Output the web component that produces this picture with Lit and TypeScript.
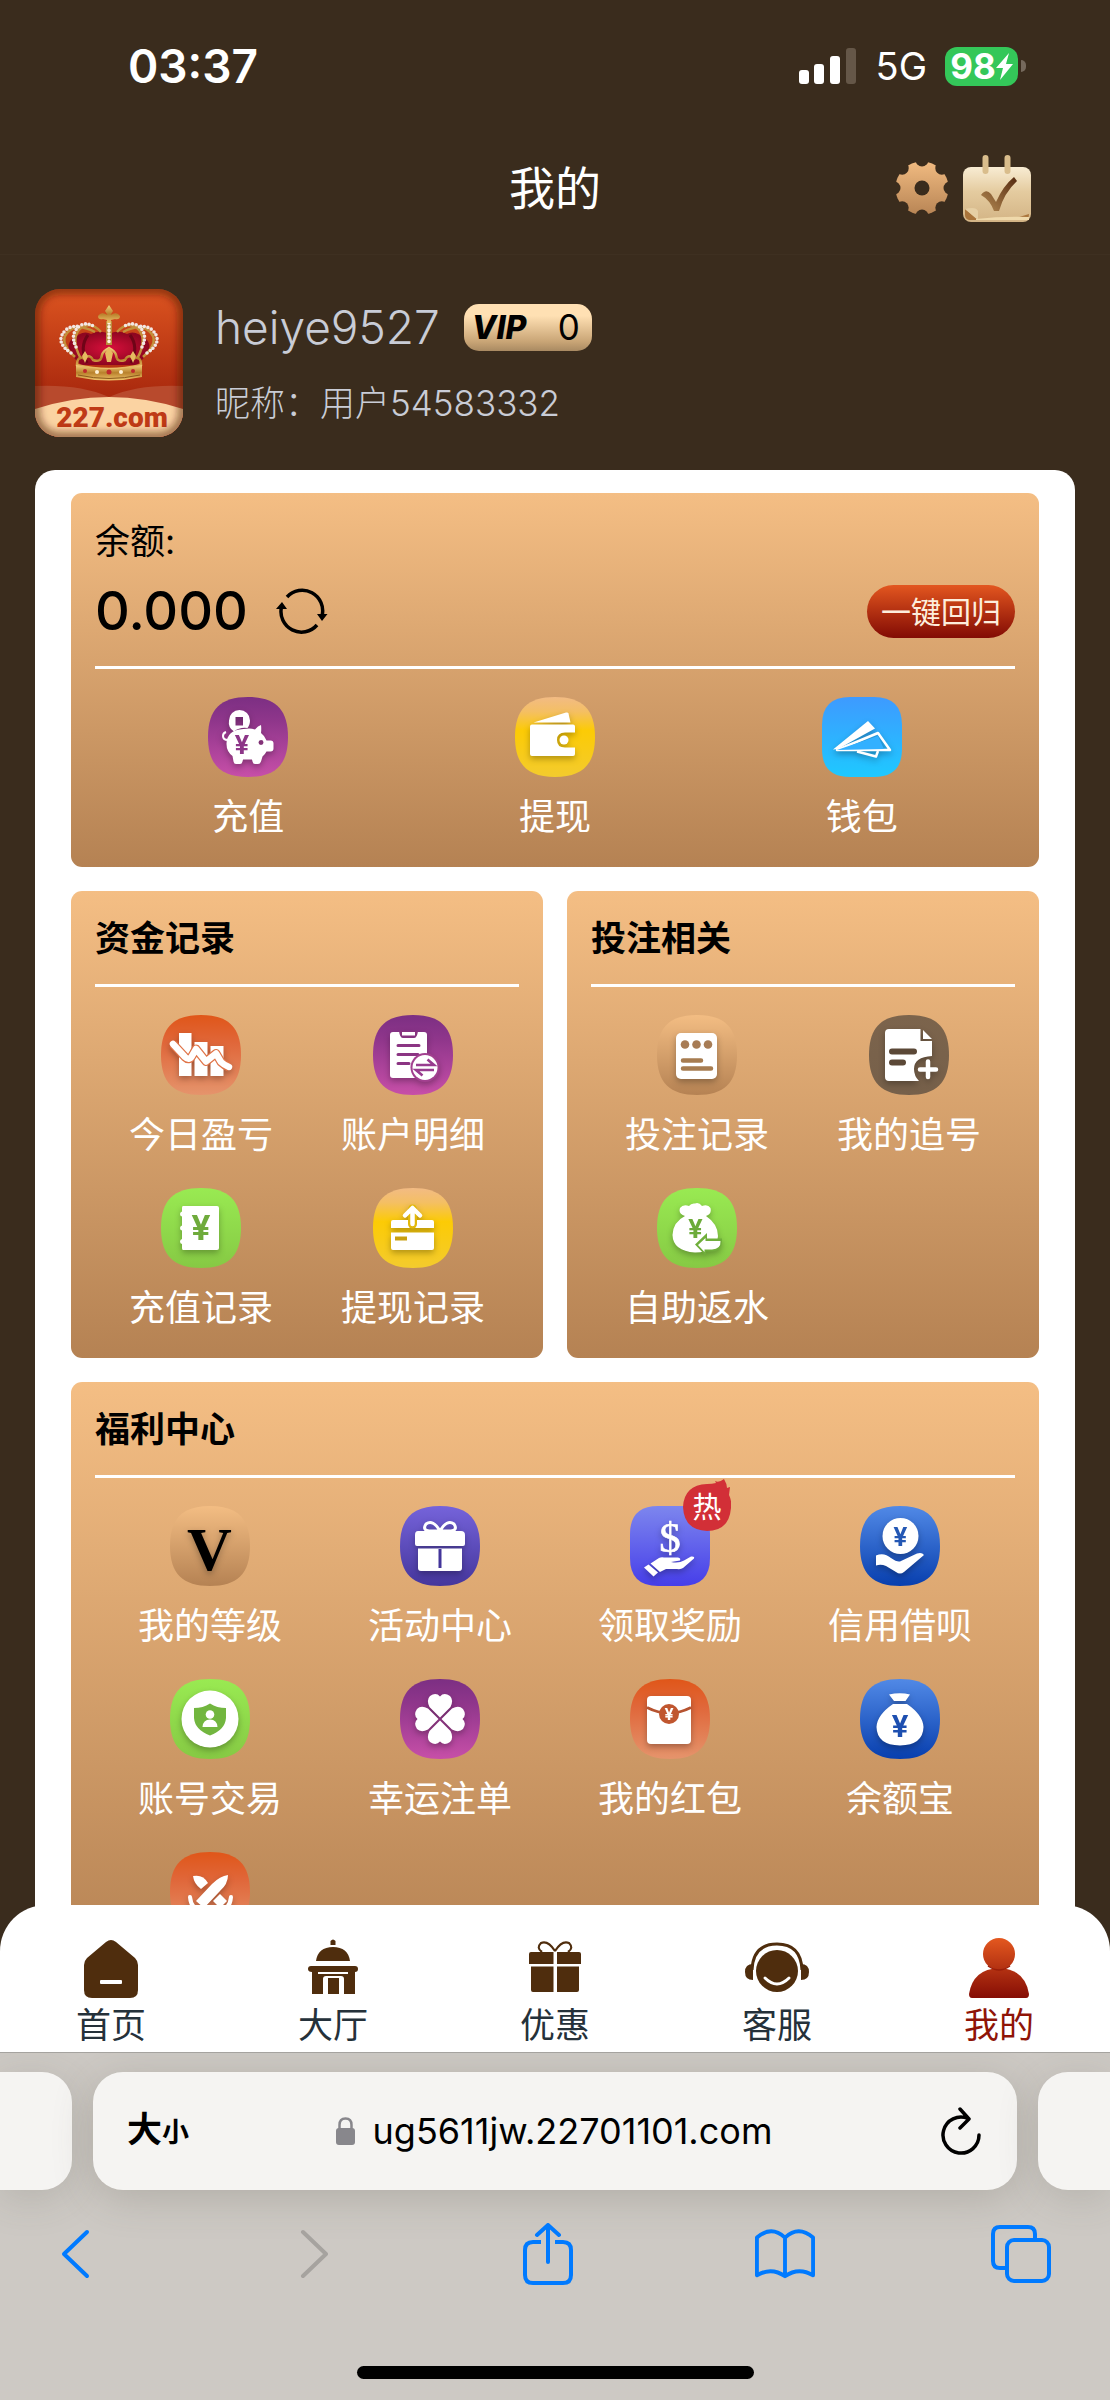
import { LitElement, html, svg, css, TemplateResult, SVGTemplateResult } from "lit";
import { customElement, property } from "lit/decorators.js";

type Stop = [number, string];

const GRADIENTS: Record<string, Stop[]> = {
  purple: [[0, "#7c2f83"], [0.3, "#8f368b"], [1, "#c74fa8"]],
  gold: [[0, "#f2bb84"], [0.18, "#f4bf64"], [0.42, "#fccb05"], [1, "#f3cb2e"]],
  sky: [[0, "#3e9aff"], [1, "#1ec9ff"]],
  orange: [[0, "#e05619"], [0.35, "#e0673a"], [1, "#e5946c"]],
  green: [[0, "#99ea52"], [1, "#86c944"]],
  tan: [[0, "#f3bd83"], [1, "#b58253"]],
  umber: [[0, "#7c644c"], [1, "#76604a"]],
  indigo: [[0, "#7563da"], [1, "#45369c"]],
  violet: [[0, "#7d86ee"], [1, "#463ee9"]],
  blue: [[0, "#5189e6"], [1, "#083fae"]],
};

const yen = (x: number, y: number, size: number, fill: string) =>
  svg`<text x=${x} y=${y} font-size=${size} fill=${fill} font-weight="700" text-anchor="middle" font-family="Inter, sans-serif">¥</text>`;

const GLYPHS: Record<string, SVGTemplateResult> = {
  piggy: svg`
    <path fill-rule="evenodd" d="M31.500 13a10.500 10.500 0 0 1 10.500 10.500c0 3-1 5.500-2.500 7.500q-8-1-13.500 3.500a10.800 10.800 0 0 1-5-11a10.500 10.500 0 0 1 10.500-10.500ZM27.500 20v8.500h7.500v-8.500Z"/>
    <path fill-rule="evenodd" d="M41 31.500q3 0 6 1 3-4 6-4.500.5 4 0 8 4 3 5.500 7.500h4q3 0 3 3v5q0 3-3 3h-4q-1.500 3-4 5l-1.500 5q-1 2.500-3 2.500h-3q-2 0-2.500-2.500l-.5-2h-9l-.5 2q-.5 2.500-2.500 2.500h-4q-2 0-2.500-2.500l-1-5.500q-6-4.500-6-12 0-14 17-15ZM53 43a2.500 2.500 0 1 0 .01 5a2.500 2.500 0 1 0-.01-5Z"/>
    <path d="M20 43q-5 0-5-4 0-3 3-4" fill="none" stroke="#fff" stroke-width="2"/>
    ${yen(34, 57, 26, "#8d3688")}`,
  wallet: svg`
    <path d="M18.500 25.500L51 15.500q2-.5 2.500 1l2 9Z"/>
    <path d="M17 27.500h41q2 0 2 2V35.500H50q-8 0-8 7.500t8 7.500H60V57q0 2-2 2H17q-2 0-2-2V29.500q0-2 2-2Z"/>
    <circle cx="49" cy="43" r="4.500"/>`,
  plane: svg`
    <path d="M11 52.500L46 24 53 31.500 16 52Z"/>
    <path d="M15 53L56 36 68 53Z" fill="none" stroke="#fff" stroke-width="2.500" stroke-linejoin="round"/>
    <path d="M15 53L56 39 62 52Z" fill="#33b0ff"/>
    <path d="M35 54.500L54 59.500 56 54" fill="none" stroke="#fff" stroke-width="2.500" stroke-linejoin="round"/>`,
  bars: svg`
    <path d="M18 18h12.500v43H18ZM33.500 27h13v34h-13ZM49.500 31h13v30h-13Z"/>
    <path d="M12 29L24 42Q28 46 31 41L35 34 45 46.500 55 38.500 60 47Q63 50 68 52" fill="none" stroke="#e07448" stroke-width="9" stroke-linejoin="round"/>
    <path d="M12 29L24 42Q28 46 31 41L35 34 45 46.500 55 38.500 60 47Q63 50 68 52" fill="none" stroke="#fff" stroke-width="6.500" stroke-linejoin="round" stroke-linecap="round"/>`,
  clipboard: svg`
    <path d="M20 17h31q3 0 3 3v40q0 3-3 3H20q-3 0-3-3V20q0-3 3-3Z"/>
    <path d="M26 16q1 8 5 7h9q4 1 5-7Z" fill="#87337f"/>
    <path d="M29 17h13v3.500H29Z"/>
    <path d="M25 30.500h21M25 39.500h20M25 48.500h11" stroke="#8b3583" stroke-width="3" stroke-linecap="round"/>
    <circle cx="52" cy="52.500" r="14.500" fill="#a2408f"/><circle cx="52" cy="52.500" r="12.500"/>
    <path d="M43 50H61L54.500 44.500M61 55H43L49.500 60.500" stroke="#983c8f" stroke-width="2.600" fill="none"/>`,
  ledger: svg`
    <path d="M22 18h34q2 0 2 2v40q0 2-2 2H22q-1 0-1-2v-4q-2-.5-2-2.500t2-2.500V42.500q-2-.5-2-2.500t2-2.500V28.500q-2-.5-2-2.500t2-2.500V20q0-2 1-2Z"/>
    ${yen(40, 52, 34, "#6fab3c")}`,
  cardup: svg`
    <path d="M20 32h39q2 0 2 2v6H18v-6q0-2 2-2ZM18 44.500h43V60q0 2-2 2H20q-2 0-2-2Z"/>
    <path d="M22 48.500h12v4H22Z" fill="#c9a011"/>
    <path d="M39.500 21V36" stroke="#e2b808" stroke-width="9" stroke-linecap="round"/>
    <path d="M39.500 21V36M32 27.500L39.500 20 47 27.500" fill="none" stroke="#fff" stroke-width="4.500" stroke-linecap="round" stroke-linejoin="round"/>`,
  betlist: svg`
    <rect x="19" y="18" width="41" height="46" rx="5"/>
    <g fill="#a77c55"><circle cx="28" cy="29.500" r="4.300"/><circle cx="39.500" cy="29.500" r="4.300"/><circle cx="51" cy="29.500" r="4.300"/></g>
    <path d="M26 45.500H44M26 53.500H54" stroke="#a77c50" stroke-width="4.500" stroke-linecap="round"/>`,
  chase: svg`
    <path d="M20 14H51.500V26H63V41Q45 42 45 54 45 61 50 66H20Q16 66 16 62V18Q16 14 20 14ZM54 15L63 24H54Z"/>
    <path d="M23 36.500H45M23 47.500H34" stroke="#5b4837" stroke-width="6" stroke-linecap="round"/>
    <path d="M59 46.500V62M51 54.500H67" stroke="#fff" stroke-width="4.500" stroke-linecap="round"/>`,
  rebate: svg`
    <path d="M28 28Q21 26 23 20 26 16 32 18 34 15 38 15.500 42 14 45 18 51 16 53.500 20 55 26 49 28 61 36 61 48 60 64 38 64.500 16 63 15.500 47 16 34 28 28Z"/>
    <path d="M38 56.500L50 45V50.500H65Q66 63 55 63.500H49V68Z" fill="#6fae3b"/>
    <path d="M41 57L48.500 50V53H63.500Q64 61 55 61.500H47.500V64Z"/>
    ${yen(38.5, 50, 26, "#6cab3a")}`,
  level: svg`<text x="39.500" y="64" font-size="62" font-weight="700" fill="#000" text-anchor="middle" font-family="Liberation Serif, serif">V</text>`,
  gift: svg`
    <path d="M18 25H61Q65 25 65 29V38Q65 40 63 40H17Q15 40 15 38V29Q15 25 18 25ZM18 42.500H62V62Q62 65 59 65H21Q18 65 18 62Z"/>
    <path d="M40 43V62" stroke="#43359a" stroke-width="3"/>
    <path d="M40 25Q33 13 26 18 22 24 29 25ZM40 25Q47 13 54 18 58 24 51 25Z" fill="none" stroke="#fff" stroke-width="3"/>`,
  shield: svg`
    <circle cx="40" cy="40" r="28.500"/>
    <path d="M40 24.500Q47 29 56 29V39Q55 51 40 56.500 25 51 24 39V29Q33 29 40 24.500Z" fill="#72b63f"/>
    <circle cx="40" cy="35.500" r="4.300"/><path d="M32.500 48Q33 40.500 40 40.500T47.500 48Z"/>`,
  clover: svg`${[0, 90, 180, 270].map(
    (a) => svg`<path transform="rotate(${a} 40 40)" d="M40 38.500L29.500 28Q26 21 30 17 36 13 40 17.500 44 13 50 17 54 21 50.500 28Z"/>`
  )}`,
  reward: svg`
    <text x="40" y="45.500" font-size="43" fill="#fff" stroke="#fff" stroke-width=".6" text-anchor="middle" font-family="Liberation Serif, serif">$</text>
    <path d="M14 61.500L18.500 58.500 28 66.500 23.500 70.500Z"/>
    <path d="M20.500 57.500L29 52Q31 51 34 51.500H48Q51 52 50 54.500L41 56Q49 57.500 54 54.500L61 50.500Q65 50 64 52.500L53 62Q51 63.500 47 63H36L30 66Z"/>`,
  credit: svg`
    <circle cx="40.500" cy="30" r="18"/>
    ${yen(40.5, 39.5, 25, "#2458b4")}
    <path d="M16 49.500Q24 46 31 52 38 57 41 55L57 47.500Q62 46 64 49L44 66Q40 69 36 66L26 60Q21 58 16 59.500Z"/>`,
  envelope: svg`
    <rect x="17" y="17" width="44" height="48" rx="4"/>
    <path d="M17 28.500Q28 34 39 34.500 50 34 61 28.500" fill="none" stroke="#b65330" stroke-width="3"/>
    <circle cx="39" cy="35" r="10" fill="#c0562f"/>
    ${yen(39, 40.5, 16, "#fff")}`,
  moneybag: svg`
    <path d="M29 15.500Q40 13 50 15.500L45.500 22H34ZM33 25H47Q63 36 63.500 48 63 66 40 66.500 17 66 16.500 48 17 36 33 25Z"/>
    ${yen(40, 58, 30, "#1d4fb0")}`,
  swords: svg`
    <path d="M23 24Q33 22 38 31L31 37Q24 32 23 24Z"/>
    <path d="M58 23Q58 32 50 39L34 56 26 49 42 32Q50 24 58 23Z"/>
    <path d="M50 42L57 49 50 56 43 49Z"/>
    <path d="M20 45Q21 58 34 61M61 45Q60 58 47 61" fill="none" stroke="#fff" stroke-width="4" stroke-linecap="round"/>`,
};

const SQUIRCLE = "M40 0C67 0 80 12 80 40S67 80 40 80 0 68 0 40 13 0 40 0Z";
const ROUNDED = "M28 0H52Q80 0 80 28V52Q80 80 52 80H28Q0 80 0 52V28Q0 0 28 0Z";

@customElement("app-tile")
class AppTile extends LitElement {
  @property() glyph = "";
  @property() tone = "tan";
  @property() label = "";
  @property() badge = "";
  @property({ type: Boolean }) rounded = false;

  static styles = css`
    :host { display: block; }
    .tile {
      display: flex; flex-direction: column; align-items: center; gap: 16px;
      text-decoration: none; color: #fff; font-size: 36px; line-height: 48px; white-space: nowrap;
    }
    .art { position: relative; display: block; width: 80px; height: 80px; }
    .icon { display: block; width: 80px; height: 80px; overflow: visible; }
    .glyph { filter: drop-shadow(0 3px 3px rgba(0, 0, 0, 0.28)); }
    .badge {
      position: absolute; left: 53px; top: -27px; width: 48px; height: 52px;
      display: flex; align-items: flex-end; justify-content: center;
    }
    .flame { position: absolute; inset: 0; width: 48px; height: 52px; }
    .hot { position: relative; font-size: 29px; line-height: 46px; }
  `;

  render() {
    const stops = GRADIENTS[this.tone];
    return html`
      <a class="tile" href="#">
        <span class="art">
          <svg class="icon" viewBox="0 0 80 80" aria-hidden="true">
            <defs>
              <linearGradient id="tone" x1="0" y1="0" x2="0" y2="1">
                ${stops.map(([o, c]) => svg`<stop offset=${o} stop-color=${c}></stop>`)}
              </linearGradient>
            </defs>
            <path d=${this.rounded ? ROUNDED : SQUIRCLE} fill="url(#tone)"></path>
            <g class="glyph" fill="#fff">${GLYPHS[this.glyph]}</g>
          </svg>
          ${this.badge
            ? html`<span class="badge">
                <svg class="flame" viewBox="0 0 48 52" aria-hidden="true">
                  <path fill="#d22f37" d="M24 5Q29 5 33 4L32 2Q36 4 41 0 44 5 44 9L47 8 46 16Q49 22 48 29 46 52 24 52 1 51 0 28 1 6 24 5Z"></path>
                </svg>
                <span class="hot">${this.badge}</span>
              </span>`
            : null}
        </span>
        <span>${this.label}</span>
      </a>
    `;
  }
}

interface Tile {
  glyph: string;
  tone: string;
  label: string;
  badge?: string;
  rounded?: boolean;
}

const WALLET: Tile[] = [
  { glyph: "piggy", tone: "purple", label: "充值" },
  { glyph: "wallet", tone: "gold", label: "提现" },
  { glyph: "plane", tone: "sky", label: "钱包", rounded: true },
];
const FUNDS: Tile[] = [
  { glyph: "bars", tone: "orange", label: "今日盈亏" },
  { glyph: "clipboard", tone: "purple", label: "账户明细" },
  { glyph: "ledger", tone: "green", label: "充值记录" },
  { glyph: "cardup", tone: "gold", label: "提现记录" },
];
const BETS: Tile[] = [
  { glyph: "betlist", tone: "tan", label: "投注记录" },
  { glyph: "chase", tone: "umber", label: "我的追号" },
  { glyph: "rebate", tone: "green", label: "自助返水" },
];
const WELFARE: Tile[] = [
  { glyph: "level", tone: "tan", label: "我的等级" },
  { glyph: "gift", tone: "indigo", label: "活动中心" },
  { glyph: "reward", tone: "violet", label: "领取奖励", badge: "热", rounded: true },
  { glyph: "credit", tone: "blue", label: "信用借呗" },
  { glyph: "shield", tone: "green", label: "账号交易" },
  { glyph: "clover", tone: "purple", label: "幸运注单" },
  { glyph: "envelope", tone: "orange", label: "我的红包" },
  { glyph: "moneybag", tone: "blue", label: "余额宝" },
  { glyph: "swords", tone: "orange", label: "" },
];

const TABS: { label: string; art: SVGTemplateResult; active?: boolean }[] = [
  {
    label: "首页",
    art: svg`<path d="M25 4Q30 0 35 4L54 20Q57 23 57 27V52Q57 60 49 60H11Q3 60 3 52V27Q3 23 6 20Z"/><rect x="19" y="42" width="22" height="4" rx="1" fill="#fff"/>`,
  },
  {
    label: "大厅",
    art: svg`<path d="M27.500 7V3Q30 0 32.500 3V7ZM13 23Q15 9 30 9T47 23ZM8 28H52Q55 28 55 31T52 34V56H41V41Q41 38 38 38H23Q20 38 20 41V56H9V34Q5 34 5 31T8 28ZM25 40H36V56H25Z"/><path d="M15 35H45" stroke="#fff" stroke-width="2"/>`,
  },
  {
    label: "优惠",
    art: svg`<path d="M6 14H28.500V26H4V16Q4 14 6 14ZM32 14H54Q56 14 56 16V26H32ZM6 28.500H28.500V54H8Q6 54 6 52ZM32 28.500H54V52Q54 54 52 54H32Z"/><path d="M30 13Q23 2 16 5 11 10 17 14M30 13Q37 2 44 5 49 10 43 14" fill="none" stroke="#4f2d0d" stroke-width="2.200"/>`,
  },
  {
    label: "客服",
    art: svg`<circle cx="30" cy="33" r="21"/><path d="M5 32Q6 6 30 6T55 32" fill="none" stroke="#4f2d0d" stroke-width="3"/><path d="M6 26V42Q-2 42-2 34T6 26ZM54 26V42Q62 42 62 34T54 26Z"/><path d="M18 40Q30 52 42 40" fill="none" stroke="#fff" stroke-width="3" stroke-linecap="round"/>`,
  },
  {
    label: "我的",
    active: true,
    art: svg`<defs><linearGradient id="me" x1="0" y1="0" x2="0" y2="60" gradientUnits="userSpaceOnUse"><stop offset="0" stop-color="#e4581f"/><stop offset="1" stop-color="#850d05"/></linearGradient></defs>
      <g fill="url(#me)"><path d="M30 30Q56 31 60 56 60 60 57 60H3Q0 60 0 56 4 31 30 30Z"/><circle cx="30" cy="16" r="16"/></g><path d="M19 28Q30 36 41 28" stroke="#9a1d08" stroke-width="1.500" fill="none"/>`,
  },
];

@customElement("app-root")
class AppRoot extends LitElement {
  static styles = css`
    * { box-sizing: border-box; }
    :host {
      display: flex; flex-direction: column; height: 100vh; overflow: hidden;
      background: #3a2c1d; color: #fff;
      font-family: Inter, "Noto Sans CJK SC", sans-serif; font-size: 35px; line-height: 48px;
    }
    button { border: 0; padding: 0; background: none; color: inherit; font: inherit; cursor: pointer; }
    svg { display: block; }
    h1, h2, p { margin: 0; }

    .status { display: flex; align-items: center; justify-content: space-between; padding: 42px 84px 32px 128px; }
    .time { font-size: 46px; font-weight: 600; }
    .signals { display: flex; align-items: center; }
    .network { margin: 0 18px 0 20px; font-size: 38px; }
    .battery {
      display: flex; align-items: center; justify-content: center; width: 73px; height: 39px;
      border-radius: 12px; background: #34c759; font-size: 35px; line-height: 39px; font-weight: 700;
    }
    .nub { width: 5px; height: 12px; margin-left: 3px; border-radius: 0 6px 6px 0; background: #75695c; }

    .header {
      display: grid; grid-template-columns: 1fr auto 1fr; align-items: center; height: 133px;
      padding: 0 78px; border-bottom: 1px solid #3e3021; flex: none;
    }
    .header-title { grid-column: 2; font-size: 46px; line-height: 64px; font-weight: 400; }
    .actions { display: flex; justify-content: flex-end; align-items: center; gap: 14px; }

    .scroller { flex: 1; min-height: 0; overflow: hidden auto; scrollbar-width: none; }
    .profile { display: flex; align-items: center; gap: 32px; padding: 34px 35px 33px; }
    .who { display: flex; flex-direction: column; gap: 24px; color: #c9ccd6; }
    .name-row { display: flex; align-items: center; gap: 24px; }
    .name { font-size: 46px; line-height: 56px; font-weight: 300; }
    .nick { font-weight: 300; }
    .vip {
      display: flex; align-items: center; justify-content: space-between; width: 128px; height: 47px;
      padding: 0 12px 0 8px; border-radius: 15px; color: #000; line-height: 47px; font-size: 35px;
      background: linear-gradient(#ffe0b3 25%, #c9a576 80%, #a98a62);
    }
    .vip-word { font-size: 32px; font-weight: 800; font-style: italic; }

    .panel {
      display: flex; flex-direction: column; gap: 24px; margin: 0 35px; padding: 23px 36px 80px;
      border-radius: 20px 20px 0 0; background: #fff;
    }
    .pair { display: grid; grid-template-columns: 1fr 1fr; gap: 24px; }
    .card { padding: 0 24px 26px; border-radius: 11px; background: linear-gradient(#f4be84, #b58253); }
    .card-title {
      padding: 23px 0 22px; border-bottom: 3px solid #fff; color: #000; font-weight: 600;
      font-size: 35px; line-height: 48px;
    }
    .tiles { display: grid; row-gap: 29px; padding-top: 28px; }
    .three { grid-template-columns: repeat(3, 1fr); }
    .two { grid-template-columns: repeat(2, 1fr); }
    .four { grid-template-columns: repeat(4, 1fr); }
    .balance { padding: 24px 0 9px; border-bottom: 3px solid #fff; color: #000; }
    .amount-row { display: flex; align-items: center; height: 92px; gap: 28px; }
    .amount { font-size: 54px; font-weight: 500; }
    .collect {
      margin-left: auto; padding: 0 14px; height: 53px; border-radius: 27px; font-size: 30px; line-height: 55px;
      color: #fdeedd; background: linear-gradient(#e3561f, #820b04);
    }

    .tabs {
      position: relative; flex: none; display: grid; grid-template-columns: repeat(5, 1fr);
      margin-top: -46px; padding: 33px 0 3px; border-radius: 46px 46px 0 0; background: #fff;
    }
    .tab {
      display: flex; flex-direction: column; align-items: center; gap: 3px;
      color: #25313a; text-decoration: none; line-height: 48px;
    }
    .tab.active { color: #8f1407; }
    .tab-art { width: 60px; height: 60px; fill: #4f2d0d; overflow: visible; }

    .browser { flex: none; border-top: 1px solid #a5a39f; background: #cdc9c4; overflow: hidden; }
    .address-row { display: flex; gap: 21px; padding: 19px 0 0; }
    .peek { flex: 0 0 72px; height: 118px; background: #f5f4f2; box-shadow: 0 8px 40px rgba(80, 76, 66, 0.18); }
    .peek.left { border-radius: 0 30px 30px 0; }
    .peek.right { border-radius: 30px 0 0 30px; }
    .address {
      flex: 1; display: grid; grid-template-columns: 1fr auto 1fr; align-items: center; height: 118px; padding: 0 36px 0 34px;
      border-radius: 30px; background: #f5f4f2; color: #000; box-shadow: 0 8px 40px rgba(80, 76, 66, 0.22);
    }
    .textsize { justify-self: start; font-weight: 600; }
    .reload { justify-self: end; }
    .small { font-size: 27px; }
    .site { display: flex; align-items: center; gap: 18px; font-size: 36px; }
    .toolbar { display: flex; justify-content: space-between; align-items: center; height: 62px; margin: 33px 59px 0 45px; }
    .tool { display: flex; justify-content: center; width: 60px; }
    .indicator { width: 397px; height: 13px; margin: 81px auto 21px; border-radius: 7px; background: #000; }
  `;

  private tiles(items: Tile[], columns: string): TemplateResult {
    return html`<div class="tiles ${columns}">
      ${items.map(
        (t) => html`<app-tile .glyph=${t.glyph} .tone=${t.tone} .label=${t.label} .badge=${t.badge ?? ""} .rounded=${!!t.rounded}></app-tile>`
      )}
    </div>`;
  }

  private avatar() {
    return html`<svg width="148" height="148" viewBox="0 0 148 148" role="img" aria-label="227.com">
      <defs>
        <linearGradient id="av" x1="0" y1="0" x2="0" y2="1"><stop offset="0" stop-color="#dc5420"></stop><stop offset=".7" stop-color="#ab2a0e"></stop></linearGradient>
        <linearGradient id="au" x1="0" y1="0" x2="0" y2="1"><stop offset="0" stop-color="#f3cf7a"></stop><stop offset=".5" stop-color="#b9812c"></stop><stop offset="1" stop-color="#f0c56c"></stop></linearGradient>
        <radialGradient id="velvet"><stop offset="0" stop-color="#d80f3c"></stop><stop offset="1" stop-color="#8e0620"></stop></radialGradient>
        <clipPath id="avclip"><rect width="148" height="148" rx="25"></rect></clipPath>
        <filter id="soft"><feGaussianBlur stdDeviation="4"></feGaussianBlur></filter>
      </defs>
      <g clip-path="url(#avclip)">
        <rect width="148" height="148" fill="url(#av)"></rect>
        <path d="M0 97Q45 95 74 108 103 95 148 97V148H0Z" fill="#b84a2d"></path>
        <path d="M0 120Q74 96 148 120V148H0Z" fill="#fbd3a2"></path>
        <path d="M46 76Q28 60 36 51 48 40 56 45 65 40 74 45 83 40 92 45 100 40 112 51 120 60 102 76Z" fill="url(#velvet)"></path>
        <path d="M52 74Q44 58 53 46M96 74Q104 58 95 46" stroke="#6f0417" stroke-width="3" fill="none"></path>
        <path d="M40 68Q22 52 34 42 43 34 60 43M108 68Q126 52 114 42 105 34 88 43M46 70Q34 48 47 38 57 33 66 43M102 70Q114 48 101 38 91 33 82 43" fill="none" stroke="#c3903b" stroke-width="2.500"></path>
        <path d="M36 64Q18 52 32 40 38 36 46 38M112 64Q130 52 116 40 110 36 102 38M41 58Q34 44 46 36 53 33 60 38M107 58Q114 44 102 36 95 33 88 38" fill="none" stroke="#f3e7e2" stroke-width="3.600" stroke-linecap="round" stroke-dasharray="0 3.700"></path>
        <path d="M74 32V56" stroke="#b98b3c" stroke-width="6"></path>
        <path d="M74 34V56" stroke="#fff4e4" stroke-width="3.600" stroke-linecap="round" stroke-dasharray="0 3.700"></path>
        <path d="M74 16L78 22 75.500 26Q82 22 85 27 85 31 80 30L76 31V34H72V31L68 30Q63 31 63 27 66 22 72.500 26L70 22Z" fill="url(#au)"></path>
        <path d="M42 76Q42 66 50 70 54 64 58 71 66 74 67 66 68 62 74 59 80 62 81 66 82 74 90 71 94 64 98 70 106 66 106 76 90 80 74 80 58 80 42 76Z" fill="none" stroke="url(#au)" stroke-width="2.500"></path>
        <path d="M74 58L78 64 76 73H72L70 64ZM50 62L53 67 50 74 47 67ZM98 62L101 67 98 74 95 67Z" fill="#e6bb60"></path>
        <path d="M41 76Q74 84 107 76V88Q74 95 41 88Z" fill="url(#au)"></path>
        <path d="M43 86Q74 93 105 86" fill="none" stroke="#8b5a1b" stroke-width="1"></path>
        <g fill="#c02a2c"><circle cx="50" cy="82" r="2"></circle><circle cx="74" cy="83" r="2.500"></circle><circle cx="98" cy="82" r="2"></circle></g>
        <g fill="#fff1d5"><circle cx="62" cy="83" r="2"></circle><circle cx="86" cy="83" r="2"></circle></g>
        <text x="77" y="138" font-size="28" font-weight="900" fill="#bf3a16" text-anchor="middle" font-family="Roboto, 'Liberation Sans', sans-serif">227.com</text>
        <rect width="148" height="148" rx="25" fill="none" stroke="#4a1d08" stroke-opacity=".75" stroke-width="7" filter="url(#soft)"></rect>
      </g>
    </svg>`;
  }

  render() {
    return html`
      <div class="status">
        <span class="time">03:37</span>
        <div class="signals">
          <svg width="57" height="36" viewBox="0 0 57 36" fill="#fff" aria-hidden="true">
            <rect y="22" width="10" height="14" rx="3"></rect><rect x="15" y="16" width="10" height="20" rx="3"></rect>
            <rect x="31" y="8" width="10" height="28" rx="3"></rect><rect x="47" width="10" height="36" rx="3" fill="#655748"></rect>
          </svg>
          <span class="network">5G</span>
          <span class="battery">98<svg width="17" height="27" viewBox="0 0 17 27" fill="#fff" aria-hidden="true"><path d="M13 0L0 15H7L4 27 17 11H10Z"></path></svg></span>
          <span class="nub"></span>
        </div>
      </div>

      <header class="header">
        <h1 class="header-title">我的</h1>
        <div class="actions">
          <button aria-label="设置">
            <svg width="52" height="52" viewBox="0 0 52 52">
              <defs>
                <linearGradient id="gear" x1="0" y1="0" x2="0" y2="1"><stop offset="0" stop-color="#f1bb81"></stop><stop offset="1" stop-color="#b88555"></stop></linearGradient>
                <mask id="teeth"><rect width="52" height="52" fill="#fff"></rect><circle cx="26" cy="26" r="7.500"></circle>
                  ${[0, 45, 90, 135, 180, 225, 270, 315].map((a) => svg`<circle cx="26" cy="-2" r="6.500" transform="rotate(${a} 26 26)"></circle>`)}
                </mask>
              </defs>
              <circle cx="26" cy="26" r="26.500" fill="url(#gear)" mask="url(#teeth)"></circle>
            </svg>
          </button>
          <button aria-label="签到">
            <svg width="70" height="67" viewBox="0 0 70 67">
              <defs>
                <linearGradient id="cal" x1="0" y1="0" x2="0" y2="1"><stop offset="0" stop-color="#f8ecd3"></stop><stop offset=".45" stop-color="#e4cb9f"></stop><stop offset="1" stop-color="#d3b485"></stop></linearGradient>
                <linearGradient id="tick" x1="0" y1="1" x2="1" y2="0"><stop offset="0" stop-color="#b48a52"></stop><stop offset="1" stop-color="#552a10"></stop></linearGradient>
              </defs>
              <rect x="1" y="12" width="68" height="55" rx="8" fill="url(#cal)"></rect>
              <path d="M3 54L16 65H7Q3 64 3 60ZM48 65L67 59Q67 65 62 65Z" fill="#a9743b"></path>
              <path d="M3 54Q14 51 16 56V65Z" fill="#e6cfa4"></path>
              <path d="M14 64Q40 61 67 62V65H14Z" fill="#efd9ab"></path>
              <path d="M23.500 3V16M45.500 3V16" stroke="#d9bd8c" stroke-width="6" stroke-linecap="round"></path>
              <path d="M19 40Q24 33 29 39L34 47Q41 31 52 22L55 26Q42 38 37 56H32Q28 45 19 40Z" fill="url(#tick)"></path>
            </svg>
          </button>
        </div>
      </header>

      <main class="scroller">
        <section class="profile">
          ${this.avatar()}
          <div class="who">
            <div class="name-row">
              <span class="name">heiye9527</span>
              <span class="vip"><span class="vip-word">VIP</span><span>0</span></span>
            </div>
            <p class="nick">昵称：用户54583332</p>
          </div>
        </section>

        <div class="panel">
          <section class="card">
            <div class="balance">
              <p>余额:</p>
              <div class="amount-row">
                <span class="amount">0.000</span>
                <button aria-label="刷新余额">
                  <svg width="52" height="46" viewBox="0 0 52 46" fill="none" stroke="#000" stroke-width="3.500">
                    <path d="M11 9A20.500 20.500 0 0 1 46 28M41 37A20.500 20.500 0 0 1 5.500 19"></path>
                    <path d="M0 21L6 14 11 21ZM41 26L51.500 26 46 33Z" fill="#000" stroke="none"></path>
                  </svg>
                </button>
                <button class="collect">一键回归</button>
              </div>
            </div>
            ${this.tiles(WALLET, "three")}
          </section>

          <div class="pair">
            <section class="card"><h2 class="card-title">资金记录</h2>${this.tiles(FUNDS, "two")}</section>
            <section class="card"><h2 class="card-title">投注相关</h2>${this.tiles(BETS, "two")}</section>
          </div>

          <section class="card"><h2 class="card-title">福利中心</h2>${this.tiles(WELFARE, "four")}</section>
        </div>
      </main>

      <nav class="tabs">
        ${TABS.map(
          (t) => html`<a class="tab ${t.active ? "active" : ""}" href="#">
            <svg class="tab-art" viewBox="0 0 60 60" aria-hidden="true">${t.art}</svg><span>${t.label}</span>
          </a>`
        )}
      </nav>

      <footer class="browser">
        <div class="address-row">
          <div class="peek left"></div>
          <div class="address">
            <button class="textsize">大<span class="small">小</span></button>
            <span class="site">
              <svg width="19" height="28" viewBox="0 0 19 28" aria-hidden="true"><rect y="11" width="19" height="17" rx="3" fill="#88878c"></rect><path d="M3.500 12V8Q3.500 1.500 9.500 1.500T15.500 8V12" fill="none" stroke="#88878c" stroke-width="2.500"></path></svg>
              <span>ug5611jw.22701101.com</span>
            </span>
            <button class="reload" aria-label="重新载入">
              <svg width="40" height="48" viewBox="0 0 40 48" fill="none" stroke="#000" stroke-width="3.500" stroke-linecap="round" stroke-linejoin="round"><path d="M38 28A18 18 0 1 1 27 11.500M19 2L28 12 19 21"></path></svg>
            </button>
          </div>
          <div class="peek right"></div>
        </div>
        <div class="toolbar">
          <button class="tool" aria-label="后退"><svg width="33" height="52" viewBox="0 0 33 52" fill="none" stroke="#007aff" stroke-width="4" stroke-linecap="round" stroke-linejoin="round"><path d="M28 4L5 26 28 48"></path></svg></button>
          <button class="tool" aria-label="前进"><svg width="33" height="52" viewBox="0 0 33 52" fill="none" stroke="#a6a39f" stroke-width="4" stroke-linecap="round" stroke-linejoin="round"><path d="M8 4L31 26 8 48"></path></svg></button>
          <button class="tool" aria-label="分享"><svg width="50" height="62" viewBox="0 0 50 62" fill="none" stroke="#007aff" stroke-width="4" stroke-linejoin="round"><path d="M18 19H10Q2 19 2 27V52Q2 60 10 60H40Q48 60 48 52V27Q48 19 40 19H32"></path><path d="M25 39V2M14 12L25 2 36 12" stroke-linecap="round"></path></svg></button>
          <button class="tool" aria-label="书签"><svg width="62" height="52" viewBox="0 0 62 52" fill="none" stroke="#007aff" stroke-width="4" stroke-linejoin="round"><path d="M2 9Q17-4 31 9 45-4 60 9V48Q45 39 31 49 17 39 2 48ZM31 9V49"></path></svg></button>
          <button class="tool" aria-label="标签页"><svg width="60" height="58" viewBox="0 0 60 58" fill="none" stroke="#007aff" stroke-width="4"><rect x="16" y="15" width="42" height="41" rx="7"></rect><path d="M15 43H9Q2 43 2 36V9Q2 2 9 2H37Q44 2 44 9V14"></path></svg></button>
        </div>
        <div class="indicator"></div>
      </footer>
    `;
  }
}
